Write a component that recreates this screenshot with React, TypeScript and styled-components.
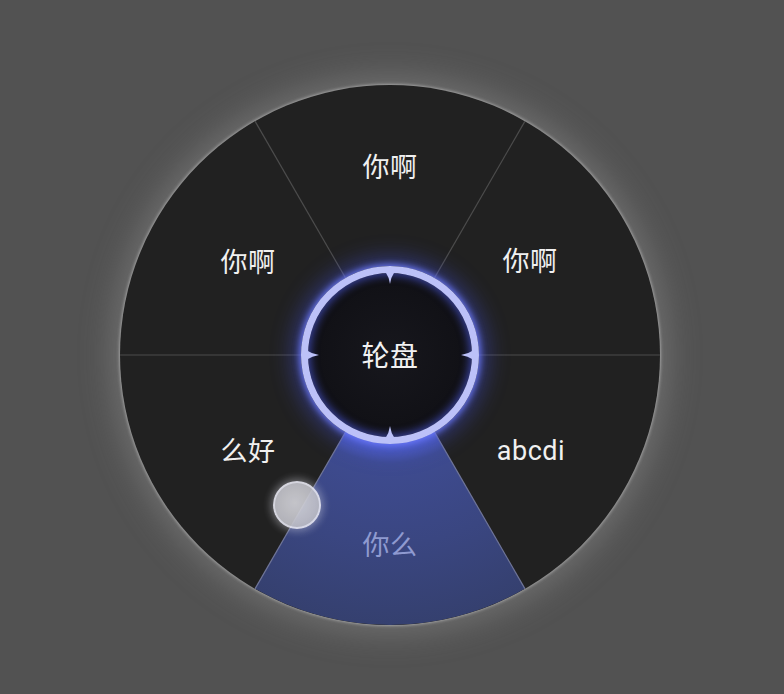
import React from 'react';
import styled, { createGlobalStyle } from 'styled-components';

const GlobalStyle = createGlobalStyle`
  html, body {
    margin: 0;
    padding: 0;
    background: #525252;
  }
`;

const WHEEL = 540;
const C = WHEEL / 2;
const HUB = 178;
const RING = 7;

type Slice = {
  label: string;
  x: number;
  y: number;
  active?: boolean;
};

// label centres, in wheel coordinates
const slices: Slice[] = [
  { label: '你啊', x: 270, y: 83 },
  { label: '你啊', x: 410, y: 177 },
  { label: 'abcdi', x: 411, y: 366 },
  { label: '你么', x: 270, y: 461, active: true },
  { label: '么好', x: 128, y: 367 },
  { label: '你啊', x: 128, y: 178 },
];

const Page = styled.div`
  width: 784px;
  height: 694px;
  box-sizing: border-box;
  padding: 85px 0 0 120px;
  overflow: hidden;
`;

const Wheel = styled.div`
  position: relative;
  display: grid;
  width: ${WHEEL}px;
  height: ${WHEEL}px;
  border-radius: 50%;
  background: #212121;
  box-shadow:
    0 0 3px 1px rgba(210, 210, 210, 0.55),
    0 0 32px 8px rgba(170, 170, 170, 0.35);
  font-family: Roboto, 'Noto Sans CJK SC', sans-serif;

  & > svg,
  & > div {
    grid-area: 1 / 1;
  }
`;

const Sectors = styled.svg`
  display: block;
  border-radius: 50%;
`;

const Label = styled.span<{ $active?: boolean }>`
  position: absolute;
  transform: translate(-50%, -50%);
  font-size: 27px;
  line-height: 1;
  white-space: nowrap;
  color: ${(p) => (p.$active ? '#8f9ad0' : '#f0f0f0')};
  letter-spacing: 0.5px;
`;

const Hub = styled.div`
  position: relative;
  place-self: center;
  width: ${HUB}px;
  height: ${HUB}px;
  box-sizing: border-box;
  border-radius: 50%;
  border: ${RING}px solid #bcc1f8;
  background: radial-gradient(circle, #17171d 0%, #111116 62%, #151634 86%, #2a2f86 100%);
  box-shadow:
    0 0 6px 2px rgba(110, 125, 255, 0.85),
    0 0 22px 8px rgba(70, 85, 230, 0.45),
    inset 0 0 8px 2px rgba(90, 105, 255, 0.55);
  display: flex;
  align-items: center;
  justify-content: center;
`;

const HubText = styled.span`
  position: relative;
  font-size: 28px;
  line-height: 1;
  color: #f2f2f2;
  letter-spacing: 0.5px;
  margin-top: 4px;
`;

const Notches = styled.svg`
  position: absolute;
  inset: -${RING}px;
`;

const Knob = styled.div`
  position: absolute;
  left: 153px;
  top: 396px;
  width: 44px;
  height: 44px;
  border-radius: 50%;
  background: radial-gradient(circle at 45% 45%, #d6d6dc 0%, #c4c4cb 60%, #b2b2ba 100%);
  border: 2px solid rgba(240, 240, 250, 0.85);
  box-shadow: 0 0 8px 2px rgba(230, 230, 240, 0.45);
  opacity: 0.9;
`;

const pt = (deg: number, r: number) => {
  const a = (deg * Math.PI) / 180;
  return [C + r * Math.cos(a), C + r * Math.sin(a)];
};

const sectorPath = (a0: number, a1: number, r: number) => {
  const [x0, y0] = pt(a0, r);
  const [x1, y1] = pt(a1, r);
  return `M${C} ${C} L${x0} ${y0} A${r} ${r} 0 0 1 ${x1} ${y1} Z`;
};

const dividers = [0, 60, 120, 180, 240, 300];

const notchPath = (deg: number) => {
  // small thorn pointing inward from the ring's inner edge
  const cx = HUB / 2;
  const cy = HUB / 2;
  const a = (deg * Math.PI) / 180;
  const ux = Math.cos(a);
  const uy = Math.sin(a);
  const px = -uy;
  const py = ux;
  const rBase = HUB / 2 - RING + 1;
  const rTip = rBase - 12;
  const w = 4.5;
  const bx = cx + ux * rBase;
  const by = cy + uy * rBase;
  const tx = cx + ux * rTip;
  const ty = cy + uy * rTip;
  const mx = cx + ux * (rBase - 5);
  const my = cy + uy * (rBase - 5);
  return `M${bx + px * w} ${by + py * w} Q${mx + px * 1} ${my + py * 1} ${tx} ${ty} Q${mx - px * 1} ${my - py * 1} ${bx - px * w} ${by - py * w} Z`;
};

const App = () => {
  return (
    <Page>
      <GlobalStyle />
      <Wheel>
        <Sectors width={WHEEL} height={WHEEL} viewBox={`0 0 ${WHEEL} ${WHEEL}`}>
          <defs>
            <radialGradient id="activeFill" cx={C} cy={C} r={C} gradientUnits="userSpaceOnUse">
              <stop offset="0.32" stopColor="#5161c8" />
              <stop offset="0.4" stopColor="#3e4b90" />
              <stop offset="0.7" stopColor="#3a4681" />
              <stop offset="1" stopColor="#35406f" />
            </radialGradient>
          </defs>
          <path d={sectorPath(60, 120, C)} fill="url(#activeFill)" />
          {dividers.map((deg) => {
            const [x0, y0] = pt(deg, HUB / 2);
            const [x1, y1] = pt(deg, C);
            const edge = deg === 60 || deg === 120;
            return (
              <line
                key={deg}
                x1={x0}
                y1={y0}
                x2={x1}
                y2={y1}
                stroke={edge ? '#6f7598' : '#4c4c4c'}
                strokeWidth={1.2}
              />
            );
          })}
        </Sectors>
        <Hub>
          <Notches viewBox={`0 0 ${HUB} ${HUB}`}>
            {[-90, 0, 90, 180].map((deg) => (
              <path key={deg} d={notchPath(deg)} fill="#bcc1f8" />
            ))}
          </Notches>
          <HubText>轮盘</HubText>
        </Hub>
        {slices.map((s, i) => (
          <Label key={i} $active={s.active} style={{ left: s.x, top: s.y }}>
            {s.label}
          </Label>
        ))}
        <Knob />
      </Wheel>
    </Page>
  );
};

export default App;
